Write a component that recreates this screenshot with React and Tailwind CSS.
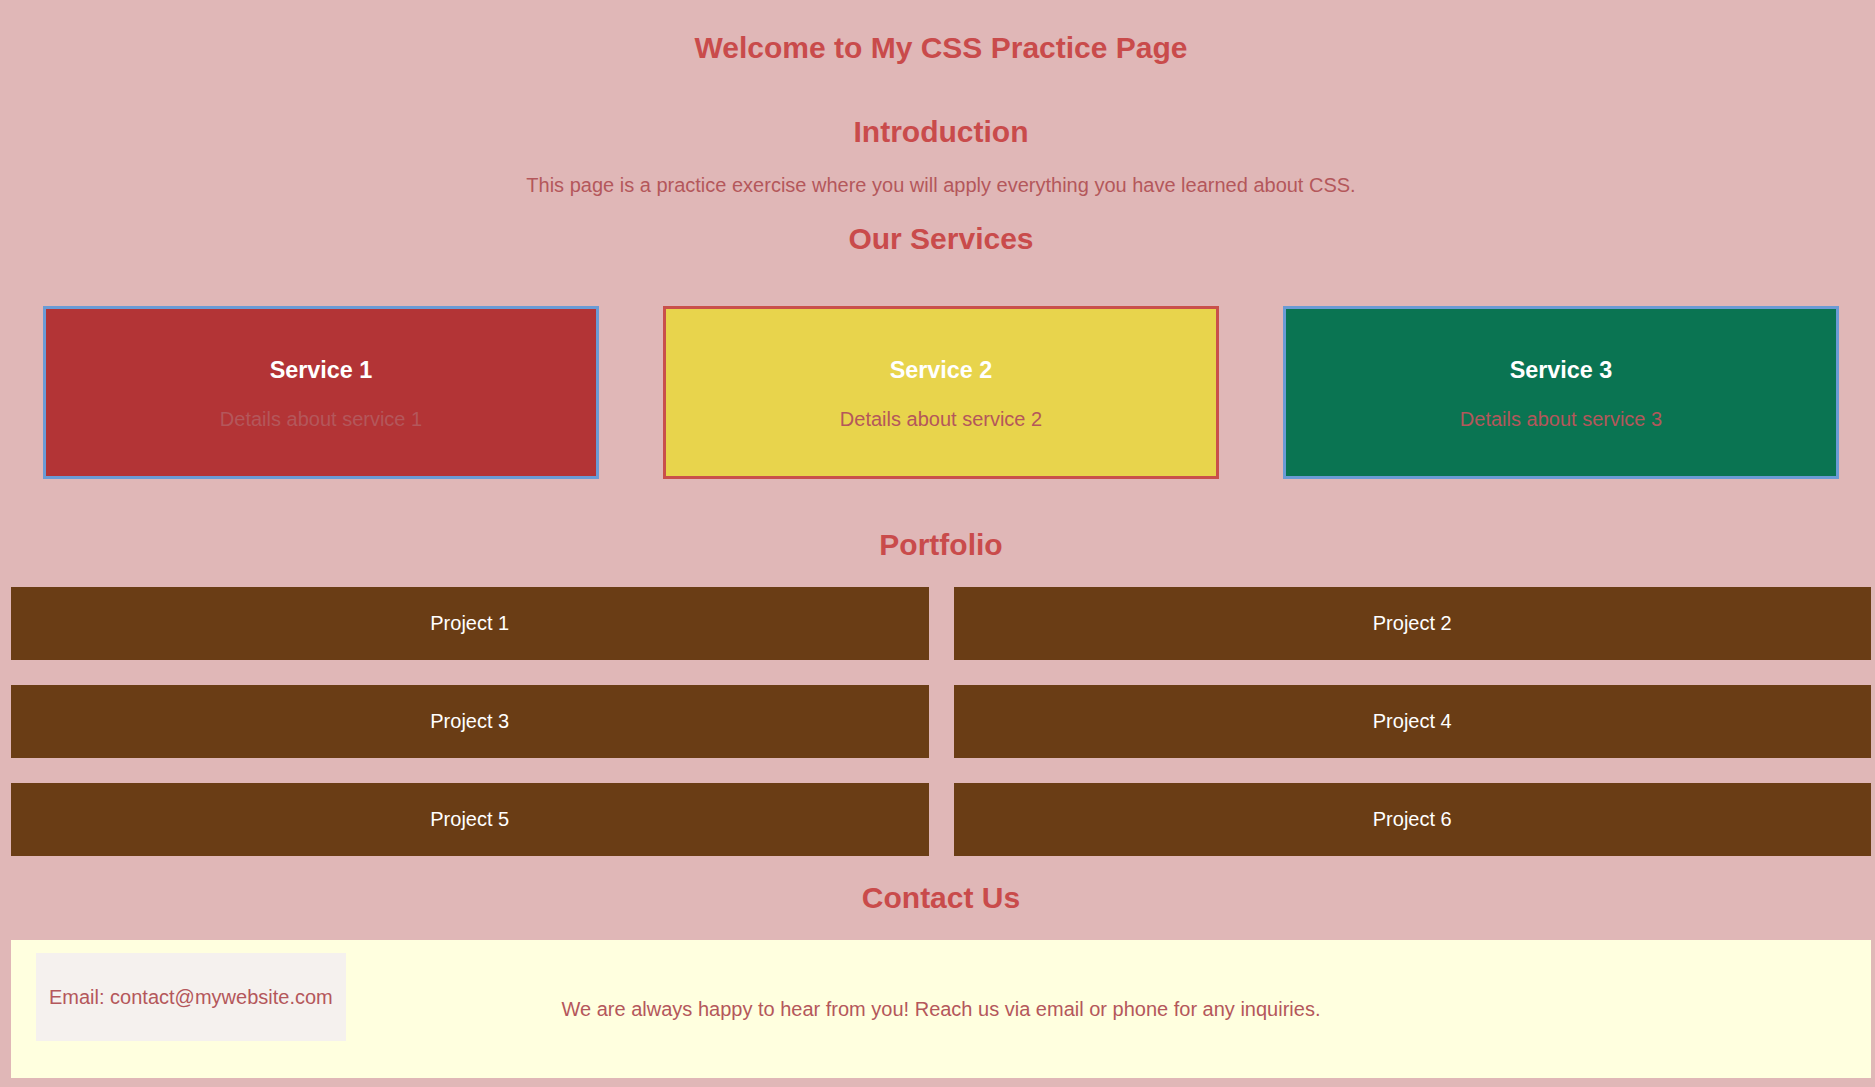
const services = [
  { title: "Service 1", bg: "bg-[#b33436]", border: "border-[#6a9bd5]" },
  { title: "Service 2", bg: "bg-[#e8d44c]", border: "border-[#c9504b]" },
  { title: "Service 3", bg: "bg-[#0a7452]", border: "border-[#6a9bd5]" },
];

const projects = ["Project 1", "Project 2", "Project 3", "Project 4", "Project 5", "Project 6"];

const Heading = ({ children, className = "" }) => (
  <h2 className={`text-center text-[30px] leading-[36px] font-bold text-[#c94b4b] ${className}`}>
    {children}
  </h2>
);

export default function App() {
  return (
    <div className="min-h-screen w-full bg-[#e0b7b7] pb-[9px] font-['Liberation_Sans',Arial,sans-serif]">
      <div className="ml-[11px] mr-[4px]">
        <h1 className="pt-[30px] text-center text-[30px] leading-[36px] font-bold text-[#c94b4b]">
          Welcome to My CSS Practice Page
        </h1>

        {/* Introduction */}
        <Heading className="mt-[48px]">Introduction</Heading>
        <p className="mt-[24px] text-center text-[20px] leading-[23px] text-[#b4575b]">
          This page is a practice exercise where you will apply everything you have learned about CSS.
        </p>

        {/* Services */}
        <Heading className="mt-[24px]">Our Services</Heading>
        <div className="mt-[49px] flex gap-[64px] pl-[32px]">
          {services.map((s) => (
            <div
              key={s.title}
              className={`flex h-[173px] w-[556px] flex-col items-center border-[3px] pt-[48px] ${s.bg} ${s.border}`}
            >
              <h3 className="text-[23.4px] leading-[27px] font-bold text-white">{s.title}</h3>
              <p className="mt-[24px] text-[20px] leading-[23px] text-[#b4575b]">
                Details about {s.title.toLowerCase()}
              </p>
            </div>
          ))}
        </div>

        {/* Portfolio */}
        <Heading className="mt-[48px]">Portfolio</Heading>
        <div className="mt-[24px] grid grid-cols-2 gap-[25px]">
          {projects.map((p) => (
            <div
              key={p}
              className="flex h-[73px] items-center justify-center bg-[#6a3d15] text-[20px] leading-[23px] text-white"
            >
              {p}
            </div>
          ))}
        </div>

        {/* Contact */}
        <Heading className="mt-[24px]">Contact Us</Heading>
        <div className="mt-[24px] grid h-[138px] grid-cols-[1fr_auto_1fr] bg-[#ffffdf] px-[25px] pt-[13px] pb-[13px] text-[20px] leading-[23px] text-[#b4575b]">
          <div className="flex h-[88px] items-center self-start justify-self-start bg-[#f5f1ee] px-[13px]">
            Email: contact@mywebsite.com
          </div>
          <p className="self-center text-center">
            We are always happy to hear from you! Reach us via email or phone for any inquiries.
          </p>
          <div />
        </div>
      </div>
    </div>
  );
}
